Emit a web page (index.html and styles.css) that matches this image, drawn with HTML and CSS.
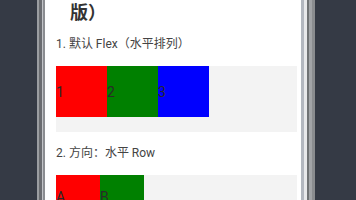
FILE: index.html
```html
<!DOCTYPE html>
<html lang="zh">
<head>
<meta charset="utf-8">
<title>Flex 布局示例</title>
<link rel="stylesheet" href="styles.css">
</head>
<body>
<div class="phone">
  <div class="bezel bezel-left"></div>
  <div class="screen">
    <div class="content">
      <h1 class="heading">Flex 布局测试（兼容性示例<br>版）</h1>
      <p class="label">1. 默认 Flex（水平排列）</p>
      <div class="demo demo-default">
        <div class="item red">1</div>
        <div class="item green">2</div>
        <div class="item blue">3</div>
      </div>
      <p class="label">2. 方向：水平 Row</p>
      <div class="demo demo-row">
        <div class="item small red">A</div>
        <div class="item small green">B</div>
      </div>
    </div>
    <div class="scrollbar"></div>
  </div>
  <div class="bezel bezel-right"></div>
</div>
</body>
</html>
```
FILE: styles.css
```css
html, body {
  margin: 0;
  padding: 0;
}
body {
  width: 356px;
  height: 200px;
  overflow: hidden;
  background: #353a45;
  font-family: Roboto, "Noto Sans CJK SC", sans-serif;
}
.phone {
  display: flex;
  margin-left: 37px;
  width: 278px;
  height: 200px;
}
.bezel {
  flex: none;
  width: 8px;
  height: 100%;
}
.bezel-left {
  background: linear-gradient(to right, #9b9da1 0 2px, #6a6c70 2px 5px, #c2c4c8 5px 6px, #8b8d91 6px 8px);
}
.bezel-right {
  background: linear-gradient(to right, #707274 0 2px, #a2a4a7 2px 5px, #8a8c8f 5px 8px);
}
.screen {
  flex: none;
  width: 262px;
  height: 100%;
  display: flex;
  background: #ffffff;
  overflow: hidden;
}
.content {
  flex: none;
  width: 252px;
  box-sizing: border-box;
  padding-left: 11px;
}
.scrollbar {
  flex: none;
  width: 10px;
  background: linear-gradient(to right, #ffffff 0 4px, #b3b7bf 4px 7px, #e8e8ea 7px 10px);
}
.heading {
  margin: -19px 0 0 0;
  padding-left: 14px;
  font-size: 18px;
  line-height: 21px;
  font-weight: bold;
  color: #333333;
  white-space: nowrap;
}
.label {
  margin: 13px 0 13px 0;
  font-size: 12px;
  line-height: 17px;
  color: #444444;
}
.demo {
  display: flex;
  align-items: flex-start;
  background: #f3f3f3;
  margin-bottom: 12px;
}
.demo-default {
  height: 66px;
}
.demo-row {
  height: 66px;
}
.item {
  flex: none;
  width: 51px;
  height: 51px;
  display: flex;
  align-items: center;
  font-size: 14px;
  color: #2a2a2a;
}
.item.small {
  width: 44px;
  height: 44px;
}
.red { background: #ff0000; }
.green { background: #008000; }
.blue { background: #0000ff; }
```
